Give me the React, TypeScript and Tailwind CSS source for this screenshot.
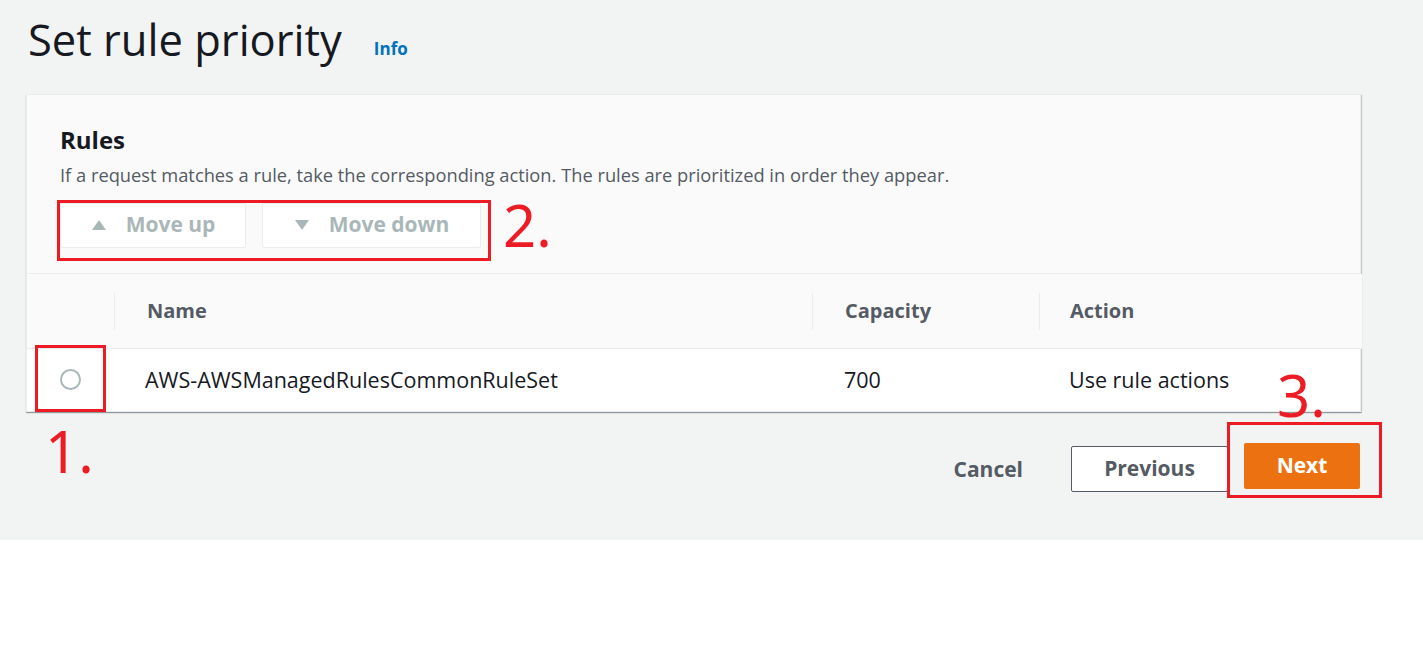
import React from 'react'

const font = { fontFamily: '"Open Sans", "Noto Sans", sans-serif' }
const mark = { fontFamily: '"Noto Sans", sans-serif' }

function Triangle({ down }: { down?: boolean }) {
  return (
    <svg width="16" height="12" viewBox="0 0 16 12" className="shrink-0">
      {down ? <polygon points="1,1 15,1 8,11" fill="#aab7b8" /> : <polygon points="1,11 15,11 8,1" fill="#aab7b8" />}
    </svg>
  )
}

export default function App() {
  return (
    <div className="w-[1423px] h-[648px] bg-white" style={font}>
      <div className="h-[540px] bg-[#f2f3f3] pt-[12px]">
        {/* Header */}
        <div className="flex items-end pl-[28px] h-[56px]">
          <h1 className="text-[43.5px] leading-[56px] text-[#16191f] font-normal">Set rule priority</h1>
          <a className="ml-[32px] mb-[7px] text-[17px] font-bold text-[#0073bb]">Info</a>
        </div>

        {/* Card */}
        <div className="ml-[26px] mt-[26px] w-[1335px] bg-white border border-[#eaeded] shadow-[0_1px_1px_0_rgba(0,28,36,0.3),1px_1px_1px_0_rgba(0,28,36,0.15)]">
          <div className="bg-[#fafafa] px-[33px] pt-[28px] pb-[19px] border-b border-[#eaeded]">
            <h2 className="text-[24px] leading-[34px] font-bold text-[#16191f]">Rules</h2>
            <p className="text-[18.3px] leading-[26px] text-[#545b64] mt-[5px]">
              If a request matches a rule, take the corresponding action. The rules are prioritized in order they appear.
            </p>
            <div className="flex items-center mt-[8px]">
              <div className="relative flex gap-[16px] py-[3px]">
                <div className="absolute -left-[3px] top-0 w-[434px] h-[61px] border-[3px] border-[#ed1c24]" />
                <button className="w-[186px] h-[45px] bg-white border border-[#eaeded] rounded-[2px] flex items-center justify-center gap-[19px] text-[21px] font-bold text-[#aab7b8]">
                  <Triangle />
                  Move up
                </button>
                <button className="w-[219px] h-[45px] bg-white border border-[#eaeded] rounded-[2px] flex items-center justify-center gap-[19px] text-[21px] font-bold text-[#aab7b8]">
                  <Triangle down />
                  Move down
                </button>
              </div>
              <span className="ml-[22px] text-[58px] leading-[58px] text-[#ed1c24]" style={mark}>2.</span>
            </div>
          </div>

          {/* Table */}
          <div className="grid grid-cols-[87px_698px_227px_323px]">
            <div className="bg-[#fafafa] h-[75px] border-b border-[#eaeded]" />
            <div className="bg-[#fafafa] h-[75px] border-b border-[#eaeded] flex items-center">
              <div className="h-[37px] border-l border-[#eaeded] flex items-center pl-[32px] text-[20px] font-bold text-[#545b64]">Name</div>
            </div>
            <div className="bg-[#fafafa] h-[75px] border-b border-[#eaeded] flex items-center">
              <div className="h-[37px] border-l border-[#eaeded] flex items-center pl-[32px] text-[20px] font-bold text-[#545b64]">Capacity</div>
            </div>
            <div className="bg-[#fafafa] h-[75px] border-b border-[#eaeded] flex items-center">
              <div className="h-[37px] border-l border-[#eaeded] flex items-center pl-[30px] text-[20px] font-bold text-[#545b64]">Action</div>
            </div>

            <div className="h-[62px] flex items-center pl-[8px]">
              <div className="w-[71px] h-[67px] border-[3px] border-[#ed1c24] flex items-center justify-center -mt-[4px]">
                <div className="w-[21px] h-[21px] rounded-full border-2 border-[#aab7b8] bg-white mt-[2px]" />
              </div>
            </div>
            <div className="h-[62px] flex items-center pl-[31px] text-[21.5px] text-[#16191f]">AWS-AWSManagedRulesCommonRuleSet</div>
            <div className="h-[62px] flex items-center pl-[32px] text-[21.5px] text-[#16191f]">700</div>
            <div className="relative h-[62px] flex items-center pl-[30px] text-[21.5px] text-[#16191f]">
              Use rule actions
              <span className="absolute left-[238px] top-[17px] text-[58px] leading-[58px] text-[#ed1c24]" style={mark}>3.</span>
            </div>
          </div>
        </div>

        {/* Footer */}
        <div className="flex items-start mt-[10px] pl-[45px] pr-[41px]">
          <span className="text-[58px] leading-[58px] text-[#ed1c24]" style={mark}>1.</span>
          <div className="ml-auto flex items-end">
            <button className="text-[21px] font-bold text-[#545b64] mr-[48px] h-[52px] pb-[4px] flex items-center">Cancel</button>
            <button className="mb-[6px] w-[157px] h-[46px] bg-white border border-[#545b64] rounded-[2px] text-[21px] font-bold text-[#545b64]">Previous</button>
            <div className="-ml-[1px] border-[3px] border-[#ed1c24] w-[155px] h-[76px] flex items-end pb-[6px] pl-[14px]">
              <button className="w-[116px] h-[46px] bg-[#ec7211] rounded-[2px] text-[21px] font-bold text-white">Next</button>
            </div>
          </div>
        </div>
      </div>
    </div>
  )
}
